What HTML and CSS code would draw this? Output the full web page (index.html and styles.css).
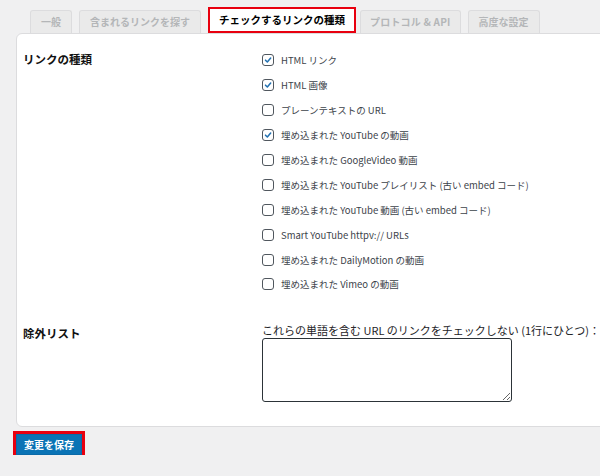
FILE: index.html
```html
<!DOCTYPE html>
<html lang="ja">
<head>
<meta charset="UTF-8">
<title>リンクチェッカー設定</title>
<link rel="stylesheet" href="styles.css">
</head>
<body>

<div class="wrap">
    <!-- Tabs -->
    <div class="tabs">
        <span class="tab">一般</span>
        <span class="tab">含まれるリンクを探す</span>
        <span class="tab active">チェックするリンクの種類</span>
        <span class="tab wide">プロトコル &amp; API</span>
        <span class="tab">高度な設定</span>
    </div>

    <!-- Settings panel -->
    <div class="panel">
        <div class="row">
            <div class="row-label">リンクの種類</div>
            <ul class="checks">
                <li><span class="box checked"><svg viewBox="0 0 12 12"><path d="M3 6.2 L5.2 8.4 L9.2 3.6"/></svg></span>HTML リンク</li>
                <li><span class="box checked"><svg viewBox="0 0 12 12"><path d="M3 6.2 L5.2 8.4 L9.2 3.6"/></svg></span>HTML 画像</li>
                <li><span class="box"></span>プレーンテキストの URL</li>
                <li><span class="box checked"><svg viewBox="0 0 12 12"><path d="M3 6.2 L5.2 8.4 L9.2 3.6"/></svg></span>埋め込まれた YouTube の動画</li>
                <li><span class="box"></span>埋め込まれた GoogleVideo 動画</li>
                <li><span class="box"></span>埋め込まれた YouTube プレイリスト (古い embed コード)</li>
                <li><span class="box"></span>埋め込まれた YouTube 動画 (古い embed コード)</li>
                <li><span class="box"></span>Smart YouTube httpv:// URLs</li>
                <li><span class="box"></span>埋め込まれた DailyMotion の動画</li>
                <li><span class="box"></span>埋め込まれた Vimeo の動画</li>
            </ul>
        </div>

        <div class="row exclude">
            <div class="row-label">除外リスト</div>
            <div class="field">
                <p>これらの単語を含む URL のリンクをチェックしない (1行にひとつ)：</p>
                <textarea></textarea>
            </div>
        </div>
    </div>

    <div class="actions">
        <button class="save">変更を保存</button>
    </div>
</div>

</body>
</html>
```

FILE: styles.css
```css
/* Reset */
* {
    box-sizing: border-box;
    margin: 0;
    padding: 0;
}

body {
    background: #f0f0f1;
    font-family: 'Noto Sans CJK JP', 'Noto Sans', sans-serif;
    color: #1d2327;
    overflow: hidden;
}

.wrap {
    padding-top: 10px;
}

/* Tabs */
.tabs {
    display: flex;
    align-items: flex-end;
    gap: 7px;
    padding-left: 30px;
    height: 23px;
}

.tab {
    height: 23px;
    line-height: 22px;
    padding: 0 10px;
    font-size: 10px;
    font-weight: bold;
    color: #b4b6b8;
    background: #eaeaea;
    border: 1px solid #dcdcde;
    border-bottom: none;
    border-radius: 3px 3px 0 0;
}

.tab.wide {
    padding: 0 9px;
    letter-spacing: 0.2px;
}

.tab.active {
    position: relative;
    z-index: 1;
    height: 26px;
    line-height: 22px;
    margin-right: -3px;
    padding: 0 9px;
    color: #000;
    background: #fff;
    border: 2px solid #e8000f;
    border-radius: 0;
    font-size: 10.5px;
}

/* Panel */
.panel {
    margin-left: 16px;
    margin-right: -20px;
    height: 394px;
    background: #fff;
    border: 1px solid #dcdcde;
    border-radius: 6px;
    padding: 14px 0 0 6px;
}

.row {
    display: flex;
}

.row-label {
    width: 239px;
    flex-shrink: 0;
    font-size: 11.5px;
    font-weight: bold;
    color: #111;
    padding-top: 3px;
}

/* Checkbox list */
.checks {
    list-style: none;
}

.checks li {
    display: flex;
    align-items: center;
    gap: 7px;
    height: 24.9px;
    font-size: 9.5px;
    color: #3c434a;
}

.box {
    width: 12px;
    height: 12px;
    border: 1px solid #50575e;
    border-radius: 3px;
    background: #fff;
    display: flex;
}

.box svg {
    width: 10px;
    height: 10px;
}

.box path {
    fill: none;
    stroke: #2271b1;
    stroke-width: 1.8;
    stroke-linecap: round;
    stroke-linejoin: round;
}

/* Exclude list */
.exclude {
    margin-top: 26px;
}

.exclude .row-label {
    padding-top: 2px;
}

.field p {
    font-size: 11px;
    color: #1d2327;
    line-height: 14px;
}

.field textarea {
    display: block;
    margin-top: 1px;
    width: 250px;
    height: 64px;
    border: 1px solid #2c3338;
    border-radius: 3px;
    resize: vertical;
}

/* Save button */
.actions {
    padding: 3px 0 0 16px;
}

.save {
    height: 21px;
    padding: 0 7px;
    font-family: 'Noto Sans CJK JP', sans-serif;
    font-size: 10px;
    font-weight: bold;
    color: #fff;
    background: #0a73b5;
    border: 1px solid #0a6aa8;
    border-radius: 0;
    outline: 3px solid #e8000f;
    outline-offset: 0;
    cursor: pointer;
}
```
